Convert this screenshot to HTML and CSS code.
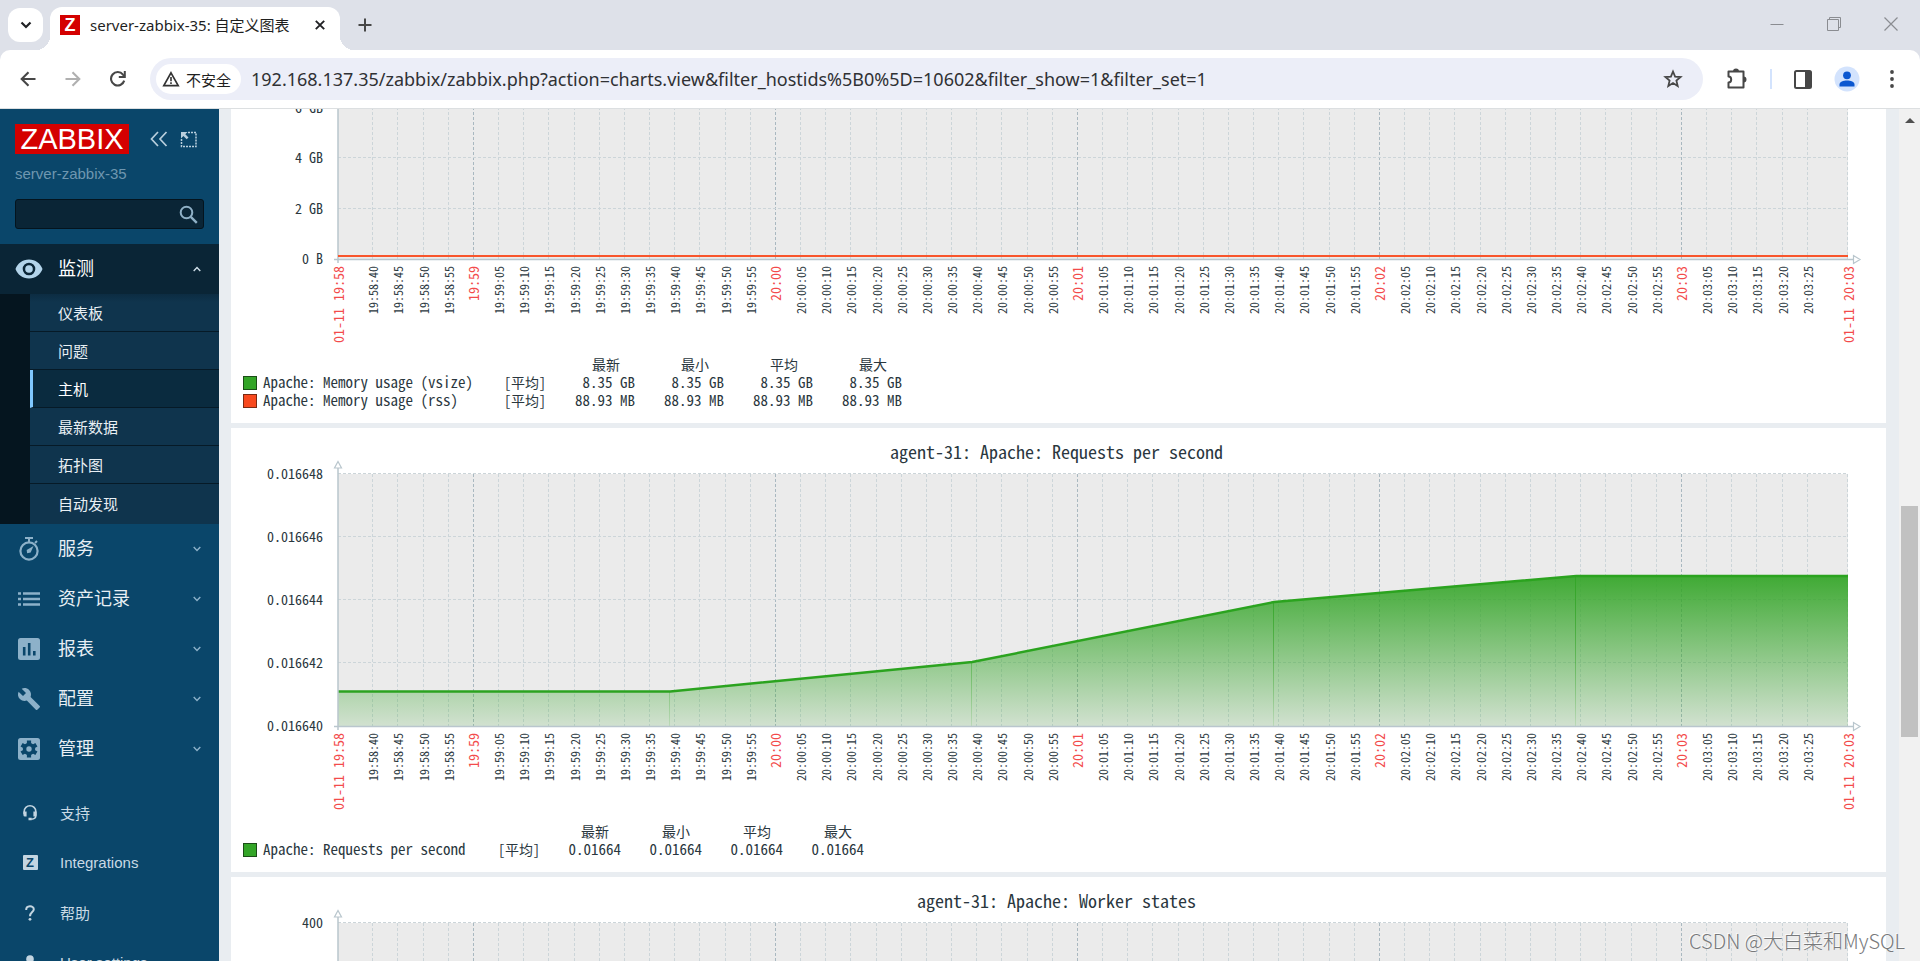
FILE: index.html
```
<!DOCTYPE html>
<html lang="zh-CN">
<head>
<meta charset="utf-8">
<title>server-zabbix-35: 自定义图表</title>
<link rel="stylesheet" href="styles.css">
</head>
<body>
<header class="tabstrip">
  <button class="tab-search" aria-label="搜索标签页"><svg width="12" height="8" viewBox="0 0 12 8"><path d="M1.5 1.5 6 6l4.500-4.500" fill="none" stroke="#202124" stroke-width="2.200"/></svg></button>
  <div class="tab">
    <span class="favicon">Z</span>
    <span class="tab-title">server-zabbix-35: 自定义图表</span>
    <button class="icon-btn" aria-label="关闭标签页"><svg width="10" height="10" viewBox="0 0 10 10"><path d="M.8.8 9.200 9.200M9.200.8.8 9.200" stroke="#202124" stroke-width="1.900"/></svg></button>
  </div>
  <button class="icon-btn new-tab" aria-label="新标签页"><svg width="14" height="14" viewBox="0 0 14 14"><path d="M7 .5v13M.5 7h13" stroke="#474747" stroke-width="2"/></svg></button>
  <div class="window-controls">
    <button class="icon-btn" aria-label="最小化"><svg width="14" height="14" viewBox="0 0 14 14"><path d="M.5 7.500h13" stroke="#8a8c91"/></svg></button>
    <button class="icon-btn" aria-label="还原"><svg width="14" height="14" viewBox="0 0 14 14"><path d="M.5 2.500h11v11H.5zM2.500 2.500v-2h11v10h-2" fill="none" stroke="#8a8c91"/></svg></button>
    <button class="icon-btn" aria-label="关闭"><svg width="14" height="14" viewBox="0 0 14 14"><path d="M.5.5l13 13M13.500.5l-13 13" stroke="#8a8c91" stroke-width="1.200"/></svg></button>
  </div>
</header>

<div class="toolbar-wrap">
<div class="toolbar">
  <div class="nav-buttons">
    <button class="icon-btn" aria-label="后退"><svg width="16" height="16" viewBox="0 0 16 16"><path d="M15.500 8H2M8.500 1.200 1.700 8l6.800 6.800" fill="none" stroke="#474747" stroke-width="2.100"/></svg></button>
    <button class="icon-btn" aria-label="前进"><svg width="16" height="16" viewBox="0 0 16 16"><path d="M.5 8H14M7.500 1.200 14.300 8l-6.800 6.800" fill="none" stroke="#b0b0b0" stroke-width="2.100"/></svg></button>
    <button class="icon-btn" aria-label="重新加载"><svg width="16" height="16" viewBox="0 0 16 16"><path d="M14.200 9.600A6.700 6.700 0 1 1 13 3.600L14.600 5.500" fill="none" stroke="#474747" stroke-width="2.100"/><path d="M15.800 0v7H8.800V5h5V0z" fill="#474747"/></svg></button>
  </div>
  <div class="omnibox">
    <button class="site-chip"><svg width="18" height="16" viewBox="0 0 18 16"><path d="M9 1.800 16.200 14.600H1.800z" fill="none" stroke="#333" stroke-width="1.700"/><path d="M9 6v4.200M9 11.200v1.800" stroke="#333" stroke-width="1.600"/></svg>不安全</button>
    <input class="url" type="text" aria-label="地址栏" value="192.168.137.35/zabbix/zabbix.php?action=charts.view&amp;filter_hostids%5B0%5D=10602&amp;filter_show=1&amp;filter_set=1">
    <button class="icon-btn" aria-label="收藏"><svg width="20" height="20" viewBox="0 0 20 20"><path d="m10 2.500 2.100 5.100 5.500.4-4.200 3.600 1.300 5.400L10 14.100 5.300 17l1.300-5.400L2.400 8l5.500-.4z" fill="none" stroke="#474747" stroke-width="1.800"/></svg></button>
  </div>
  <div class="tool-icons">
    <button class="icon-btn" aria-label="扩展程序"><svg width="22" height="22" viewBox="0 0 22 22"><path d="M2.500 3.500h15v16h-15v-5c3.600 0 3.600-6 0-6z" fill="none" stroke="#474747" stroke-width="2" stroke-linejoin="round"/><path d="M7 3.500a3 3 0 0 1 6 0zM17.500 8.500a3 3 0 0 1 0 6z" fill="#474747"/></svg></button>
    <span class="tool-sep"></span>
    <button class="icon-btn" aria-label="侧边栏"><svg width="18" height="19" viewBox="0 0 18 19"><rect x="1" y="1" width="16" height="17" rx="1.500" fill="none" stroke="#474747" stroke-width="2"/><path d="M11 1h6v17h-6z" fill="#474747"/></svg></button>
    <button class="icon-btn" aria-label="个人资料"><svg width="26" height="26" viewBox="0 0 26 26"><circle cx="13" cy="13" r="12.500" fill="#d3e3fd"/><circle cx="13" cy="9.300" r="3.900" fill="#0b57d0"/><path d="M5.500 20.500v-2c0-5.300 15-5.300 15 0v2z" fill="#0b57d0"/></svg></button>
    <button class="icon-btn more" aria-label="更多"><svg width="4" height="18" viewBox="0 0 4 18"><g fill="#474747"><circle cx="2" cy="2" r="1.900"/><circle cx="2" cy="9" r="1.900"/><circle cx="2" cy="16" r="1.900"/></g></svg></button>
  </div>
</div>
</div>

<div class="page">
  <aside class="sidebar">
    <div class="brand">
      <a class="logo" href="#">ZABBIX</a>
      <button class="icon-btn" aria-label="折叠"><svg width="18" height="16" viewBox="0 0 18 16"><path d="M8 1 1.500 8 8 15M16.500 1 10 8l6.500 7" fill="none" stroke="#b9cfdd" stroke-width="1.700"/></svg></button>
      <button class="icon-btn" aria-label="隐藏侧栏"><svg width="17" height="17" viewBox="0 0 17 17"><path d="M8 1.500h8v14H1.500V8" fill="none" stroke="#b9cfdd" stroke-width="1.500" stroke-dasharray="2 1"/><path d="M1 1h6.500L5.300 3.200l3.200 3.300-1.800 1.800-3.300-3.200L1 7.500z" fill="#b9cfdd"/></svg></button>
    </div>
    <div class="server-name">server-zabbix-35</div>
    <form class="search">
      <input type="search" aria-label="搜索">
      <button class="icon-btn" type="button" aria-label="搜索"><svg width="19" height="19" viewBox="0 0 19 19"><circle cx="7.500" cy="7.500" r="5.800" fill="none" stroke="#8fb0c6" stroke-width="2"/><path d="m11.800 11.800 6 6" stroke="#8fb0c6" stroke-width="2.400"/></svg></button>
    </form>
    <nav class="menu">
      <a class="item open" href="#"><span class="ico"><svg width="28" height="20" viewBox="0 0 28 20"><path fill-rule="evenodd" d="M14 .5C7.500.5 2.500 4.500.5 10c2 5.500 7 9.500 13.500 9.500S25.500 15.500 27.500 10C25.500 4.500 20.500.5 14 .5zm0 3.200a6.300 6.300 0 1 1 0 12.600 6.300 6.300 0 0 1 0-12.600z" fill="#b3d4ea"/><circle cx="14" cy="10" r="3.800" fill="#b3d4ea"/></svg></span><span class="label">监测</span><svg class="chev" width="8" height="6" viewBox="0 0 8 6"><path d="M.7 5 4 1.500 7.300 5" fill="none" stroke="#cfdee8" stroke-width="1.400"/></svg></a>
      <div class="submenu">
        <a href="#">仪表板</a>
        <a href="#">问题</a>
        <a class="selected" href="#">主机</a>
        <a href="#">最新数据</a>
        <a href="#">拓扑图</a>
        <a href="#">自动发现</a>
      </div>
      <a class="item" href="#"><span class="ico"><svg width="22" height="24" viewBox="0 0 22 24"><circle cx="11" cy="14" r="8.600" fill="none" stroke="#8db1c9" stroke-width="2.200"/><path d="M7 1h8M11 1v4M17 6l2-2" stroke="#8db1c9" stroke-width="2"/><path d="m15.500 9-2.800 6.600-3.600.6-.4-3.200z" fill="#8db1c9"/></svg></span><span class="label">服务</span><svg class="chev" width="8" height="6" viewBox="0 0 8 6"><path d="M.7 1 4 4.500 7.300 1" fill="none" stroke="#8db1c9" stroke-width="1.400"/></svg></a>
      <a class="item" href="#"><span class="ico"><svg width="24" height="16" viewBox="0 0 24 16"><path d="M1 2.500h3M1 8h3M1 13.500h3M6 2.500h17M6 8h17M6 13.500h17" stroke="#8db1c9" stroke-width="2.400"/></svg></span><span class="label">资产记录</span><svg class="chev" width="8" height="6" viewBox="0 0 8 6"><path d="M.7 1 4 4.500 7.300 1" fill="none" stroke="#8db1c9" stroke-width="1.400"/></svg></a>
      <a class="item" href="#"><span class="ico"><svg width="24" height="24" viewBox="0 0 24 24"><rect x="1" y="1" width="22" height="22" rx="2.500" fill="#8db1c9"/><path d="M7.200 10v8.500M12.200 6v12.500M17.300 14v4.500" stroke="#0a466a" stroke-width="2.600"/></svg></span><span class="label">报表</span><svg class="chev" width="8" height="6" viewBox="0 0 8 6"><path d="M.7 1 4 4.500 7.300 1" fill="none" stroke="#8db1c9" stroke-width="1.400"/></svg></a>
      <a class="item" href="#"><span class="ico"><svg width="24" height="24" viewBox="0 0 24 24"><path d="M22.700 19l-9.100-9.100c.9-2.300.4-5-1.500-6.900-2-2-5-2.400-7.400-1.300L9 6 6 9 1.600 4.700C.4 7.100.9 10.100 2.900 12.100c1.900 1.900 4.600 2.400 6.900 1.500l9.100 9.100c.4.4 1 .4 1.400 0l2.300-2.300c.5-.4.5-1.100.1-1.400z" fill="#8db1c9"/></svg></span><span class="label">配置</span><svg class="chev" width="8" height="6" viewBox="0 0 8 6"><path d="M.7 1 4 4.500 7.300 1" fill="none" stroke="#8db1c9" stroke-width="1.400"/></svg></a>
      <a class="item" href="#"><span class="ico"><svg width="24" height="24" viewBox="0 0 24 24"><rect x="1" y="1" width="22" height="22" rx="2.500" fill="#8db1c9"/><circle cx="12" cy="12" r="6.200" fill="#0a466a"/><path d="M12 3.500v17M4.600 7.750l14.800 8.500M4.600 16.250l14.800-8.500" stroke="#0a466a" stroke-width="4.200"/><circle cx="12" cy="12" r="2.700" fill="#8db1c9"/></svg></span><span class="label">管理</span><svg class="chev" width="8" height="6" viewBox="0 0 8 6"><path d="M.7 1 4 4.500 7.300 1" fill="none" stroke="#8db1c9" stroke-width="1.400"/></svg></a>
    </nav>
    <nav class="menu-user">
      <a href="#"><span class="ico"><svg width="16" height="17" viewBox="0 0 16 17"><path d="M2.200 10V7.500a5.800 5.800 0 0 1 11.600 0V12c0 2-1.500 3-4.500 3.200" fill="none" stroke="#c3d5e1" stroke-width="1.600"/><path d="M1.400 7.500h3.200v5H3a1.600 1.600 0 0 1-1.600-1.600zM11.400 7.500h3.200v3.400a1.600 1.600 0 0 1-1.600 1.600h-1.600zM6.500 13.800h3.200v2.400H6.500z" fill="#c3d5e1"/></svg></span>支持</a>
      <a href="#"><span class="ico"><span class="z-badge">Z</span></span>Integrations</a>
      <a href="#"><span class="ico"><svg width="10" height="16" viewBox="0 0 10 16"><path d="M1.200 5C1 .2 8.800.2 8.800 4.300 8.800 7 5 7.300 5 11.200" fill="none" stroke="#c3d5e1" stroke-width="2"/><circle cx="5" cy="14.300" r="1.400" fill="#c3d5e1"/></svg></span>帮助</a>
      <a href="#"><span class="ico"><svg width="16" height="16" viewBox="0 0 16 16"><circle cx="8" cy="4" r="3.800" fill="#c3d5e1"/><path d="M1 16c0-8 14-8 14 0z" fill="#c3d5e1"/></svg></span>User settings</a>
    </nav>
  </aside>

  <main class="content">
    <section class="panel">
      <h2></h2>
      <svg class="chart" data-chart="memory" role="img" aria-label="Apache: Memory usage"></svg>
      <table class="legend wide">
        <thead><tr><th></th><th></th><th>最新</th><th>最小</th><th>平均</th><th>最大</th></tr></thead>
        <tbody>
          <tr><td class="name"><i class="swatch green"></i>Apache: Memory usage (vsize)</td><td class="fn">[平均]</td><td>8.35 GB</td><td>8.35 GB</td><td>8.35 GB</td><td>8.35 GB</td></tr>
          <tr><td class="name"><i class="swatch red"></i>Apache: Memory usage (rss)</td><td class="fn">[平均]</td><td>88.93 MB</td><td>88.93 MB</td><td>88.93 MB</td><td>88.93 MB</td></tr>
        </tbody>
      </table>
    </section>
    <section class="panel">
      <h2>agent-31: Apache: Requests per second</h2>
      <svg class="chart" data-chart="requests" role="img" aria-label="Apache: Requests per second"></svg>
      <table class="legend">
        <thead><tr><th></th><th></th><th>最新</th><th>最小</th><th>平均</th><th>最大</th></tr></thead>
        <tbody>
          <tr><td class="name"><i class="swatch green"></i>Apache: Requests per second</td><td class="fn">[平均]</td><td>0.01664</td><td>0.01664</td><td>0.01664</td><td>0.01664</td></tr>
        </tbody>
      </table>
    </section>
    <section class="panel">
      <h2>agent-31: Apache: Worker states</h2>
      <svg class="chart" data-chart="workers" role="img" aria-label="Apache: Worker states"></svg>
    </section>
  </main>
  <div class="scrollbar"><span class="scroll-up"></span><span class="thumb"></span></div>
  <div class="watermark">CSDN @大白菜和MySQL</div>
</div>
<script src="script.js"></script>
</body>
</html>
```
FILE: styles.css
```
* { box-sizing: border-box; }
body {
  margin: 0;
  height: 100vh;
  display: flex;
  flex-direction: column;
  overflow: hidden;
  background: #fff;
  font-family: "Liberation Sans", "Noto Sans CJK SC", sans-serif;
}
button, input { font: inherit; border: 0; background: none; padding: 0; margin: 0; }
a { color: inherit; text-decoration: none; }
svg { display: block; flex: none; }
.icon-btn { display: flex; align-items: center; justify-content: center; flex: none; }

/* browser frame */
.tabstrip {
  display: flex;
  flex: none;
  height: 50px;
  padding: 7px 0 0 8px;
  background: #dee1e9;
  font-family: "Noto Sans", "Noto Sans CJK SC", sans-serif;
}
.tab-search {
  display: flex;
  align-items: center;
  justify-content: center;
  width: 35px;
  height: 34px;
  margin: 1px 7px 0 0;
  border-radius: 12px;
  background: #fff;
}
.tab {
  position: relative;
  display: flex;
  align-items: center;
  width: 290px;
  padding: 0 15px 7px 10px;
  border-radius: 12px 12px 0 0;
  background: #fff;
}
.tab::before, .tab::after {
  content: "";
  position: absolute;
  bottom: 0;
  width: 14px;
  height: 14px;
}
.tab::before { left: -14px; background: radial-gradient(circle at 0 0, transparent 14px, #fff 14px); }
.tab::after { right: -14px; background: radial-gradient(circle at 100% 0, transparent 14px, #fff 14px); }
.favicon {
  width: 20px;
  height: 20px;
  margin-right: 10px;
  background: #d40000;
  color: #fff;
  font: bold 18px/20px "Liberation Sans", sans-serif;
  text-align: center;
}
.tab-title { flex: 1; color: #1f1f1f; font-size: 15px; line-height: 20px; white-space: nowrap; }
.new-tab { width: 50px; height: 36px; }
.window-controls { display: flex; gap: 43px; margin-left: auto; padding-right: 22px; height: 34px; }
.toolbar-wrap { flex: none; background: #dee1e9; }
.toolbar {
  display: flex;
  align-items: center;
  height: 59px;
  padding: 0 26px 0 20px;
  border-bottom: 1px solid #dcdfe1;
  border-radius: 10px 10px 0 0;
  background: #fff;
  font-family: "Noto Sans", "Noto Sans CJK SC", sans-serif;
}
.nav-buttons { display: flex; gap: 29px; width: 130px; }
.omnibox {
  display: flex;
  align-items: center;
  flex: 1;
  height: 42px;
  padding: 0 20px 0 6px;
  border-radius: 21px;
  background: #eceef8;
}
.site-chip {
  display: flex;
  align-items: center;
  gap: 6px;
  height: 30px;
  padding: 0 10px 0 6px;
  border-radius: 15px;
  background: #fff;
  color: #1f1f1f;
  font-size: 15px;
}
.url { flex: 1; min-width: 0; padding-left: 10px; color: #303134; font-size: 18px; height: 30px; }
.tool-icons { display: flex; align-items: center; padding-left: 23px; gap: 22px; }
.tool-icons .more { padding-left: 8px; }
.tool-sep { width: 2px; height: 20px; background: #d3e3fd; }

/* page */
.page { position: relative; display: flex; flex: 1; min-height: 0; background: #e9edf1; }
.sidebar { flex: none; width: 219px; overflow: hidden; background: #0a466a; color: #e8eff4; }
.brand { display: flex; align-items: center; padding: 15px 22px 0 15px; }
.logo {
  width: 114px;
  height: 30px;
  margin-right: 21px;
  background: #d40000;
  color: #fff;
  font-size: 29px;
  line-height: 30px;
  text-align: center;
}
.brand .icon-btn + .icon-btn { margin-left: 12px; }
.server-name { padding: 10px 15px 15px; color: #6f97b0; font-size: 15px; line-height: 20px; }
.search {
  display: flex;
  align-items: center;
  height: 30px;
  margin: 0 15px 15px;
  padding: 0 5px 0 8px;
  border: 1px solid #04141e;
  border-radius: 3px;
  background: #0a2536;
}
.search input { flex: 1; min-width: 0; color: #fff; }
.item { display: flex; align-items: center; height: 50px; padding-right: 18px; font-size: 18px; }
.item .ico { display: flex; justify-content: center; width: 58px; }
.item .label { flex: 1; padding-bottom: 4px; }
.open { background: #0a2536; color: #fff; }
.submenu { padding: 0 0 2px 30px; background: linear-gradient(90deg, #05151f 30px, #0f344d 30px); font-size: 15px; }
.submenu a {
  display: flex;
  align-items: center;
  height: 38px;
  padding: 0 0 0 28px;
  border-bottom: 1px solid #061a27;
}
.submenu a:first-child { background: linear-gradient(#0c2c42, #0f344d 8px); }
.submenu a:last-child { border-bottom: 0; }
.submenu .selected { padding-left: 25px; border-left: 3px solid #80c8ff; background: #0a2b3f; color: #fff; }
.menu-user { padding-top: 15px; font-size: 15px; color: #c9dae5; }
.menu-user a { display: flex; align-items: center; height: 50px; padding-bottom: 3px; white-space: nowrap; }
.menu-user .ico { display: flex; justify-content: center; width: 60px; }
.z-badge { width: 15px; height: 15px; background: #c3d5e1; color: #0a466a; font-weight: bold; font-size: 13px; line-height: 15px; text-align: center; border-radius: 1px; }

.content { flex: 1; min-width: 0; overflow: hidden; padding: 0 13px 0 12px; }
.panel { margin-bottom: 5px; background: #fff; padding-bottom: 14px; color: #2a373e; font-family: "Noto Sans Mono CJK SC", "DejaVu Sans Mono", monospace; }
.panel:first-child { margin-top: -148px; }
.panel h2 { height: 32px; margin: 0; padding: 13px 4px 0 0; font-size: 18px; line-height: 20px; font-weight: normal; text-align: center; }
.chart { width: 100%; height: 362px; overflow: visible; }
.chart text { font-size: 14px; fill: #2a373e; text-anchor: end; }
.chart .tick { font-size: 12px; }
.chart .major { font-size: 14px; fill: #f34b4b; }
.legend { table-layout: fixed; width: 621px; margin-left: 12px; border-collapse: collapse; font-size: 15px; line-height: 18px; }
.legend th, .legend td { height: 18px; padding: 0; width: 81px; text-align: right; white-space: nowrap; font-weight: normal; line-height: 18px; }
.legend th { padding-right: 12px; font-size: 14px; }
.legend th:nth-child(1) { width: 255px; }
.legend th:nth-child(2) { width: 42px; }
.legend .name, .legend .fn { text-align: left; }
.legend .fn { font-size: 14px; }
.legend.wide { width: 659px; }
.legend.wide th { width: 89px; padding-right: 15px; }
.legend.wide th:nth-child(1) { width: 261px; }
.legend.wide th:nth-child(2) { width: 42px; }
.swatch { display: inline-block; width: 14px; height: 14px; margin-right: 6px; border: 1px solid #1b4d17; vertical-align: -2px; }
.green { background: #33a527; }
.red { background: #f8491e; border-color: #7a2a14; }

.scrollbar { display: flex; flex-direction: column; align-items: center; flex: none; width: 21px; background: #f1f1f1; }
.scroll-up { width: 0; height: 0; margin: 9px 0 0; border: 5px solid transparent; border-top: 0; border-bottom-color: #505050; }
.thumb { width: 17px; height: 231px; margin-top: 383px; background: #c1c1c1; }
.watermark {
  position: absolute;
  right: 15px;
  bottom: 6px;
  color: #77797b;
  font: 300 20px/28px "Noto Sans CJK SC", sans-serif;
  text-shadow: -1px -1px 0 rgba(255, 255, 255, .8);
}
```
FILE: script.js
```
const START = 19 * 3600 + 58 * 60 + 33;
const SPAN = 300;
const LEFT = 107, RIGHT_PAD = 38, TOP = 14, BOTTOM = 266;

const charts = {
  memory: { labels: ['', '', '6 GB', '4 GB', '2 GB', '0 B'], times: true },
  requests: {
    labels: ['0.016648', '0.016646', '0.016644', '0.016642', '0.016640'],
    times: true,
    points: [[0, 231.5], [66, 231.5], [126, 202], [186, 142], [246, 116], [300, 116]]
  },
  workers: { labels: ['400'], times: false }
};

const pad = n => String(n).padStart(2, '0');

function draw(svg) {
  const cfg = charts[svg.dataset.chart];
  const right = svg.clientWidth - RIGHT_PAD;
  const px = s => LEFT + (right - LEFT) * s / SPAN;
  const rot = (x, cls, t) => `<text class="${cls}" transform="translate(${x} 273) rotate(-90)">${t}</text>`;
  let out = `<rect x="${LEFT}" y="${TOP}" width="${right - LEFT}" height="${BOTTOM - TOP}" fill="#ebebeb"/>`;
  let labels = '';

  for (let s = 7; s < 295; s += 5) {
    const t = START + s, m = Math.floor(t / 60) % 60, sec = t % 60;
    const x = Math.round(px(s)) - 0.5;
    const major = sec === 0;
    out += `<path d="M${x} ${TOP}V${BOTTOM}" stroke="${major ? '#a9b8c0' : '#ccd5d9'}" stroke-dasharray="3 2"/>`;
    const hm = pad(Math.floor(t / 3600)) + ':' + pad(m);
    labels += major ? rot(x + 5, 'major', hm) : rot(x + 5, 'tick', hm + ':' + pad(sec));
  }
  out += `<path d="M${right - 0.5} ${TOP}V${BOTTOM}" stroke="#ccd5d9" stroke-dasharray="3 2"/>`;
  labels += rot(LEFT + 6, 'major', '01-11 19:58') + rot(right + 6, 'major', '01-11 20:03');
  if (!cfg.times) labels = '';

  const n = Math.max(cfg.labels.length - 1, 1);
  cfg.labels.forEach((l, i) => {
    const y = Math.round(TOP + (BOTTOM - TOP) * i / n) - 0.5;
    if (i < n) out += `<path d="M${LEFT} ${y}H${right}" stroke="#ccd5d9" stroke-dasharray="3 2"/>`;
    if (l) labels += `<text x="92" y="${y + 5}">${l}</text>`;
  });

  if (cfg.points) {
    const pts = cfg.points.map(([s, y]) => px(s) + ' ' + y);
    out += `<defs><linearGradient id="fill" gradientUnits="userSpaceOnUse" x1="0" y1="116" x2="0" y2="${BOTTOM}"><stop stop-color="#33a527" stop-opacity=".93"/><stop offset="1" stop-color="#33a527" stop-opacity=".14"/></linearGradient></defs>`;
    out += `<path d="M${pts.join('L')}V${BOTTOM}H${LEFT}z" fill="url(#fill)"/>`;
    cfg.points.slice(1, -1).forEach(([s, y]) => {
      out += `<rect x="${Math.round(px(s)) - 1}" y="${y}" width="1" height="${BOTTOM - y}" fill="url(#fill)"/>`;
    });
    out += `<path d="M${pts.join('L')}" fill="none" stroke="#2ba31f" stroke-width="2.500"/>`;
  }
  out += `<path d="M${LEFT} ${TOP - 6}V${BOTTOM + 4}M${LEFT - 4} ${BOTTOM + .5}H${right + 5}" stroke="#b9c6cd" stroke-width="1.500"/>`;
  if (svg.dataset.chart === 'memory') {
    out += `<path d="M${LEFT} 263H${right}" stroke="#f8552c" stroke-width="2"/>`;
  }
  out += `<path d="M${LEFT - 3.5} ${TOP - 6}h7l-3.500-6.500zM${right + 5.500} ${BOTTOM - 3.500}v8l6.500-4z" fill="#fff" stroke="#b9c6cd" stroke-width="1.200"/>`;
  svg.innerHTML = out + labels;
}

const drawAll = () => document.querySelectorAll('.chart').forEach(draw);
drawAll();
window.addEventListener('resize', drawAll);
```
